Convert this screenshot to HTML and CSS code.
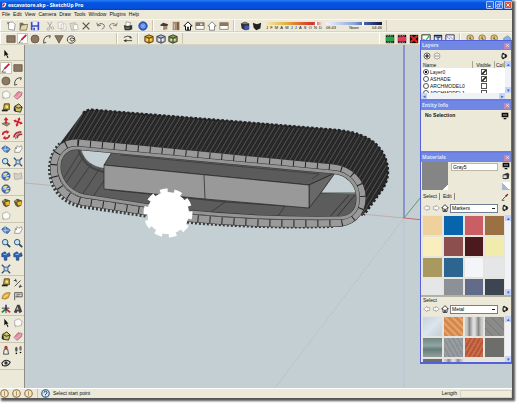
FILE: index.html
```
<!DOCTYPE html>
<html lang="en">
<head>
    <meta charset="UTF-8">
    <meta name="viewport" content="width=device-width, initial-scale=1.0">
    <title>escavatore.skp - SketchUp Pro</title>
    <link rel="stylesheet" href="styles.css">
</head>
<body>
    <svg class="sprite" aria-hidden="true">
        <symbol id="new" viewBox="0 0 12 12"><path d="M3 2l5-1 3 3-1 7-7-1z" fill="#fff" stroke="#777" stroke-width=".8"/><path d="M1 4l3-3M1 1l3 3" stroke="#555" stroke-width=".7"/></symbol>
        <symbol id="open" viewBox="0 0 12 12"><path d="M2 2h4l1 2h3v6H2z" fill="#77705a"/><path d="M4 5l8-1-2 7H2z" fill="#e2d7a5" stroke="#554f3c" stroke-width=".7"/></symbol>
        <symbol id="save" viewBox="0 0 12 12"><path d="M1 1h10v10H1z" fill="#3a4ec8"/><path d="M3 1h6v4H3zM3 7h6v4H3z" fill="#eef"/><path d="M4 8h2v3H4z" fill="#3a4ec8"/></symbol>
        <symbol id="cut" viewBox="0 0 12 12"><path d="M3 1l4 7M8 1L5 8" stroke="#aaa" stroke-width="1.2"/><g fill="none" stroke="#aaa"><circle cx="4" cy="9.500" r="1.500"/><circle cx="9" cy="8.500" r="1.500"/></g></symbol>
        <symbol id="copy" viewBox="0 0 12 12"><path d="M1 2l5-1 2 2v6H2zM5 4l4-1 2 2v6H5z" fill="#f6f5ee" stroke="#bbb" stroke-width=".8"/></symbol>
        <symbol id="paste" viewBox="0 0 12 12"><path d="M1 3l7-1 1 8-6 1z" fill="#ddd9c9" stroke="#aaa" stroke-width=".8"/><path d="M5 5l5-1 1 6-5 1z" fill="#fff" stroke="#aaa" stroke-width=".8"/></symbol>
        <symbol id="del" viewBox="0 0 12 12"><path d="M2 2l8 8M10 2l-8 8" stroke="#555" stroke-width="1.500"/></symbol>
        <symbol id="undo" viewBox="0 0 12 12"><path d="M2 5q4-4 8 0q1 3-3 5M1 2l1 4 4-1" fill="none" stroke="#777" stroke-width="1.200"/></symbol>
        <symbol id="redo" viewBox="0 0 12 12"><path d="M10 5q-4-4-8 0q-1 3 3 5M11 2l-1 4-4-1" fill="none" stroke="#888" stroke-width="1.200"/></symbol>
        <symbol id="print" viewBox="0 0 12 12"><path d="M1 5h10v5l-3 1H2z" fill="#333"/><path d="M4 1l5 1-1 4H3z" fill="#fff" stroke="#555" stroke-width=".6"/><path d="M3 8h5v1H3z" fill="#9b9"/></symbol>
        <symbol id="info" viewBox="0 0 12 12"><circle cx="6" cy="6" r="5" fill="#3461cf" stroke="#1c3d99"/><circle cx="6" cy="6" r="2.500" fill="none" stroke="#a9c4fa"/><circle cx="6" cy="6" r="1" fill="#fff"/></symbol>
        <symbol id="iso" viewBox="0 0 12 12"><path d="M1 5l4-3 6 2-1 2H3z" fill="#443b31"/><path d="M2 6h3v5L2 9z" fill="#eee"/><path d="M5 6h5v4l-5 1z" fill="#a9896a"/></symbol>
        <symbol id="top" viewBox="0 0 12 12"><path d="M2 1h5v10H2z" fill="#aa8a66"/><path d="M7 1h3v10H7z" fill="#7d6248"/><path d="M4 3v7" stroke="#eee" stroke-width=".7"/></symbol>
        <symbol id="home" viewBox="0 0 12 12"><path d="M1 6l5-5 5 5H9v5H3V6z" fill="#fff" stroke="#111" stroke-width="1.200"/><path d="M5 7h2v4H5z" fill="#111"/></symbol>
        <symbol id="right" viewBox="0 0 12 12"><path d="M1 2h10v8H1z" fill="#fff" stroke="#8b775f"/><path d="M1 2h10v4H1z" fill="#8b775f"/><path d="M6 3h3v2H6z" fill="#ddd"/></symbol>
        <symbol id="back" viewBox="0 0 12 12"><path d="M1 6l5-5 5 5H9v5H3V6z" fill="#fff" stroke="#555" stroke-width=".8"/></symbol>
        <symbol id="left" viewBox="0 0 12 12"><path d="M1 2h10v8H1z" fill="#fff" stroke="#8b775f"/><path d="M1 2h10v4H1z" fill="#8b775f"/></symbol>
        <symbol id="shadow" viewBox="0 0 12 12"><path d="M1 3l5-2 5 2v7l-5 1-4-2z" fill="#2e3034"/><path d="M1 3l5 1 5-1-5-2z" fill="#777"/><circle cx="8" cy="8" r="3" fill="#4057b4"/></symbol>
        <symbol id="box" viewBox="0 0 12 12"><path d="M1 2l5 2 5-2-1 7-5 2-3-3z" fill="#222"/></symbol>
        <symbol id="rect" viewBox="0 0 12 12"><path d="M1 2h10v8H1z" fill="#8c7863" stroke="#57493b" stroke-width=".8"/></symbol>
        <symbol id="pencil" viewBox="0 0 12 12"><path d="M10 1L4 7" stroke="#c41a2d" stroke-width="2"/><path d="M4 7l-3 4M1 11h5" stroke="#222" fill="none" stroke-width=".8"/></symbol>
        <symbol id="circle" viewBox="0 0 12 12"><circle cx="6" cy="6" r="4.800" fill="#8c7863" stroke="#57493b" stroke-width=".8"/></symbol>
        <symbol id="arc" viewBox="0 0 12 12"><path d="M2 11Q1 2 10 2M2 11l3-1M10 2l-1 3" fill="none" stroke="#333"/></symbol>
        <symbol id="poly" viewBox="0 0 12 12"><path d="M1 2h10l-5 9z" fill="#8c7863" stroke="#57493b" stroke-width=".8"/></symbol>
        <symbol id="free" viewBox="0 0 12 12"><path d="M2 9C0 3 6 1 9 3s0 7-3 5 1-5 4-2-3 7-7 4" fill="none" stroke="#333" stroke-width="1.100"/></symbol>
        <symbol id="swap" viewBox="0 0 12 12"><path d="M1 4q5-3 9 0M1 8h10" fill="none" stroke="#333"/><path d="M8 2l3 3-3 0zM4 10L1 8l3-2z" fill="#333"/></symbol>
        <symbol id="cube-y" viewBox="0 0 12 12"><path d="M1 3l5-2 5 2v6l-5 2-5-2z" fill="#dca52a" stroke="#403212"/><path d="M1 3l5 2 5-2M6 5v6" stroke="#403212" fill="none"/><path d="M3 6h2v2H3zM7 6h2v2H7z" fill="#ffe783"/></symbol>
        <symbol id="cube-w" viewBox="0 0 12 12"><path d="M1 3l5-2 5 2v6l-5 2-5-2z" fill="#b5bbd0" stroke="#2d3040"/><path d="M1 3l5 2 5-2M6 5v6" stroke="#2d3040" fill="none"/><path d="M3 6h2v2H3zM7 6h2v2H7z" fill="#fff"/></symbol>
        <symbol id="cube-g" viewBox="0 0 12 12"><path d="M1 3l5-2 5 2v6l-5 2-5-2z" fill="#8c9a60" stroke="#2f3422"/><path d="M1 3l5 2 5-2M6 5v6" stroke="#2f3422" fill="none"/><path d="M3 6h2v2H3zM7 6h2v2H7z" fill="#e6ecc8"/></symbol>
        <symbol id="film" viewBox="0 0 12 12"><path d="M1 1h10v10H1z" fill="#111"/><path d="M2 2h8M2 10h8" stroke="#eee" stroke-dasharray="1 1"/><path d="M1 4l2-1h6l2 1v4L9 9H3L1 8z" fill="currentColor"/></symbol>
        <symbol id="film-x" viewBox="0 0 12 12"><path d="M1 1h10v10H1z" fill="#111"/><path d="M2 2l8 8M10 2l-8 8" stroke="#e32424" stroke-width="2.500"/></symbol>
        <symbol id="film-ok" viewBox="0 0 12 12"><path d="M1 1h10v10H1z" fill="#f5fff5" stroke="#111"/><path d="M3 6l2 3 5-7" stroke="#2cae4e" stroke-width="1.500" fill="none"/></symbol>
        <symbol id="film-i" viewBox="0 0 12 12"><path d="M1 1h10v10H1z" fill="#18233e"/><path d="M2 3h8v6H2z" fill="#d8e4f8"/><path d="M4 4h5M6 4v5" stroke="#2c5db8" stroke-width="1.500"/></symbol>
        <symbol id="film-p" viewBox="0 0 12 12"><path d="M1 1h10v10H1z" fill="#eef" stroke="#223"/><path d="M2 3l3 2 1 3 4 2M6 3l4 4" stroke="#445fae" stroke-dasharray="2 1" fill="none"/></symbol>
        <symbol id="coin" viewBox="0 0 12 12"><circle cx="5" cy="5" r="4" fill="#ddc679" stroke="#8b7538"/><path d="M4 5l6 5M5 3v3" stroke="#604f1f" fill="none"/></symbol>
        <symbol id="hat" viewBox="0 0 12 12"><path d="M2 5l5-3 4 4-4 4-5-2z" fill="#86b3df" stroke="#55779c" stroke-width=".6"/></symbol>
        <symbol id="arrow" viewBox="0 0 12 12"><path d="M4 1v8l2-2 2 4 1-1-2-3h2z" fill="#111"/></symbol>
        <symbol id="ghost" viewBox="0 0 12 12"><path d="M2 3l5-2 4 3-1 5-5 1-3-2zM2 8l1 3" fill="#fafaf6" stroke="#999" stroke-width=".8"/></symbol>
        <symbol id="eraser" viewBox="0 0 12 12"><path d="M1 8l5-6 5 1-1 4-5 4z" fill="#e28ca6" stroke="#8f4d62" stroke-width=".7"/><path d="M1 8l4 1 5-6" stroke="#fbd0dc" fill="none" stroke-width=".8"/></symbol>
        <symbol id="tape" viewBox="0 0 12 12"><path d="M4 1h6v7H3z" fill="#c2a53f" stroke="#46391a"/><circle cx="7" cy="4.500" r="1.500" fill="#ffe98a"/><path d="M1 9h7" stroke="#222" stroke-width="2"/></symbol>
        <symbol id="paint" viewBox="0 0 12 12"><path d="M2 4l5-3 4 4-2 6-6-1z" fill="#c9bf6a" stroke="#26251a"/><path d="M2 4q4 4 9 1" stroke="#222" fill="none"/><path d="M1 5q2 0 2 6L1 9z" fill="#222"/></symbol>
        <symbol id="push" viewBox="0 0 12 12"><path d="M1 8l5-2 5 2-4 3z" fill="#9c8974" stroke="#5b4c3e" stroke-width=".6"/><path d="M5 8V4H3l3-4 3 4H7v4z" fill="#cd2030"/></symbol>
        <symbol id="move" viewBox="0 0 12 12"><path d="M6 0l2 3h-1v2h2V4l3 2-3 2V7H7v2h1l-2 3-2-3h1V7H3v1L0 6l3-2v1h2V3H4z" fill="#cf1f31" transform="rotate(20 6 6)"/></symbol>
        <symbol id="rotate" viewBox="0 0 12 12"><path d="M2 6q0-4 5-4M10 6q0 4-5 4" fill="none" stroke="#cb2435" stroke-width="2"/><path d="M6 0l4 2-3 3zM6 12l-4-2 3-3z" fill="#cb2435"/></symbol>
        <symbol id="offset" viewBox="0 0 12 12"><path d="M1 9Q2 2 10 2M5 10q0-5 6-5" fill="none" stroke="#b52435" stroke-width="1.800"/><path d="M3 11q0-7 7-8" stroke="#333" fill="none" stroke-width=".7"/></symbol>
        <symbol id="orbit" viewBox="0 0 12 12"><path d="M1 5l4-3 3 2 3 2-3 4-4-1z" fill="#5684c5" stroke="#234d91"/><path d="M5 1v9M2 7l8-1" stroke="#b9d2ef" fill="none"/></symbol>
        <symbol id="pan" viewBox="0 0 12 12"><path d="M2 10l1-6 1 2 1-4 2 2 3-2 1 3-3 5z" fill="#fff" stroke="#777" stroke-width=".8"/></symbol>
        <symbol id="zoom" viewBox="0 0 12 12"><path d="M7 7l4 4" stroke="#2c3e4f" stroke-width="2"/><circle cx="5" cy="5" r="3.300" fill="#cbe2f1" stroke="#31587c" stroke-width="1.200"/></symbol>
        <symbol id="extents" viewBox="0 0 12 12"><path d="M1 1l3 3M11 1L8 4M1 11l3-3M11 11L8 8" stroke="#2c5588" stroke-width="1.600"/><circle cx="6" cy="6" r="2.500" fill="#b8d4e8" stroke="#33516f"/></symbol>
        <symbol id="globe" viewBox="0 0 12 12"><circle cx="6" cy="6" r="5" fill="#3c6fc4" stroke="#24427c" stroke-width=".7"/><path d="M2 4q3-3 6-1l-3 3zM5 10q1-4 5-2-2 3-5 2z" fill="#f1e07d"/><path d="M2 6q4 1 8-1" stroke="#fff" fill="none"/></symbol>
        <symbol id="terrain" viewBox="0 0 12 12"><path d="M1 3q3-1 5 1l4-2 1 7-5 1-4 0z" fill="#d4d0c5" stroke="#999" stroke-width=".7"/></symbol>
        <symbol id="model" viewBox="0 0 12 12"><path d="M1 4l4-3 6 2-1 6-4 2-3-2z" fill="#665431"/><path d="M5 5l5-1v4L6 9z" fill="#e9b736"/><path d="M2 3l3 1" stroke="#88a850" stroke-width="2"/></symbol>
        <symbol id="walkzoom" viewBox="0 0 12 12"><path d="M1 3l4-2 2 3 3-2 1 4-4 1v4H4V7L1 7z" fill="#2c64bd" stroke="#173769" stroke-width=".8"/><path d="M3 4h4" stroke="#acd1ff"/></symbol>
        <symbol id="dim" viewBox="0 0 12 12"><path d="M1 3h3M2 10l7-7M7 10h4M3 1l1 4M9 8l-1 4" stroke="#333" fill="none"/></symbol>
        <symbol id="protractor" viewBox="0 0 12 12"><path d="M1 9Q2 1 11 2L9 8q-4 3-8 1z" fill="#e0b044" stroke="#8b6a1f" stroke-width=".7"/><path d="M4 8q1-3 4-3" stroke="#fff2b6" fill="none"/></symbol>
        <symbol id="text" viewBox="0 0 12 12"><path d="M2 11V2h9v5H3" fill="#d9d9d2" stroke="#444"/><path d="M4 4h5M4 6h3" stroke="#333" stroke-width=".7"/></symbol>
        <symbol id="axes" viewBox="0 0 12 12"><path d="M6 6V1" stroke="#2638bd" stroke-width="2"/><path d="M6 6l5 4" stroke="#c32a35" stroke-width="2"/><path d="M6 6l-5 4" stroke="#238038" stroke-width="2"/><path d="M6 6v5M1 5l9 0" stroke="#222"/></symbol>
        <symbol id="text3d" viewBox="0 0 12 12"><path d="M1 10l4-9h3l3 8-3 2-2-3-2 3z" fill="#444"/><path d="M5 3l2 4H4z" fill="#bbb"/></symbol>
        <symbol id="camera" viewBox="0 0 12 12"><circle cx="6" cy="3" r="2" fill="#b93838"/><path d="M4 5h4l1 6H3z" fill="#eee" stroke="#333"/></symbol>
        <symbol id="feet" viewBox="0 0 12 12"><ellipse cx="4" cy="5" rx="1.500" ry="3" fill="#555"/><ellipse cx="9" cy="4" rx="1.500" ry="3" fill="#777"/><circle cx="4" cy="10" r="1"/><circle cx="9" cy="9" r="1"/></symbol>
        <symbol id="eye" viewBox="0 0 12 12"><path d="M1 6q5-6 10-1-3 6-9 4z" fill="#eee" stroke="#222" stroke-width="1.300"/><circle cx="6" cy="6" r="2" fill="#333"/></symbol>
        <symbol id="plus" viewBox="0 0 12 12"><circle cx="6" cy="6" r="4.500" fill="#fff" stroke="#222"/><path d="M3 6h6M6 3v6" stroke="#111" stroke-width="1.600"/></symbol>
        <symbol id="minus" viewBox="0 0 12 12"><circle cx="6" cy="6" r="4.500" fill="#f8f6ec" stroke="#888"/><path d="M3 6h6" stroke="#888" stroke-width="1.400"/></symbol>
        <symbol id="menu" viewBox="0 0 12 12"><path d="M6 1l1 2h2l2 3-2 3H7l-1 2-3-1-1-3 1-5z" fill="#222"/><path d="M4 4h3v4H4z" fill="#eee"/></symbol>
        <symbol id="screen" viewBox="0 0 12 12"><path d="M1 1h10v7H1zM4 9h4v2H4z" fill="#111"/><path d="M3 4h6v1H3z" fill="#fff"/></symbol>
        <symbol id="create" viewBox="0 0 12 12"><path d="M1 4l7-3 3 2-1 7-5 1-4-1z" fill="#333"/><path d="M2 5h5v4H2z" fill="#ddd"/></symbol>
        <symbol id="dropper" viewBox="0 0 12 12"><path d="M2 10l5-5" stroke="#555" stroke-width="1.500"/><path d="M6 4l4-3 1 1-3 4z" fill="#811"/><path d="M1 11h4" stroke="#111"/></symbol>
        <symbol id="prev" viewBox="0 0 12 12"><path d="M1 6l5-4v2h4v4H6v2z" fill="#fff" stroke="#888" stroke-width=".9"/></symbol>
        <symbol id="next" viewBox="0 0 12 12"><path d="M11 6L6 2v2H2v4h4v2z" fill="#fff" stroke="#888" stroke-width=".9"/></symbol>
        <symbol id="help" viewBox="0 0 12 12"><circle cx="6" cy="6" r="5" fill="#dce9f5" stroke="#285b88" stroke-width="1.500"/><path d="M4 5q0-2 2-2t2 2q0 1-2 2v1M6 9v1" fill="none" stroke="#183d66" stroke-width="1.300"/></symbol>
        <symbol id="credit" viewBox="0 0 12 12"><circle cx="6" cy="6" r="5" fill="#f1e6c8" stroke="#8b6f3d" stroke-width="1.400"/><path d="M6 3v6" stroke="#a98d57" stroke-width="1.200"/></symbol>
        <symbol id="close" viewBox="0 0 12 12"><path d="M3 3l6 6M9 3l-6 6" stroke="#fff" stroke-width="1.800"/></symbol>
        <symbol id="min" viewBox="0 0 12 12"><path d="M3 9h4" stroke="#fff" stroke-width="2"/></symbol>
        <symbol id="max" viewBox="0 0 12 12"><path d="M5 2h5v5M2 5h5v5H2z" fill="none" stroke="#fff" stroke-width="1.200"/></symbol>
        <symbol id="logo" viewBox="0 0 12 12"><path d="M2 4l5-3 4 2-3 7-5 1z" fill="#fff"/><path d="M2 6l5-4 1 3-4 5z" fill="#d32b35"/></symbol>
    </svg>

    <div class="window">
        <header class="titlebar">
            <svg class="icon"><use href="#logo"/></svg>
            <h1>escavatore.skp - SketchUp Pro</h1>
            <button class="win-btn" aria-label="Minimize"><svg><use href="#min"/></svg></button>
            <button class="win-btn" aria-label="Restore"><svg><use href="#max"/></svg></button>
            <button class="win-btn win-close" aria-label="Close"><svg><use href="#close"/></svg></button>
        </header>

        <nav class="menubar">
            <button>File</button>
            <button>Edit</button>
            <button>View</button>
            <button>Camera</button>
            <button>Draw</button>
            <button>Tools</button>
            <button>Window</button>
            <button>Plugins</button>
            <button>Help</button>
        </nav>

        <div class="toolbar">
            <div class="tools">
                <button aria-label="New"><svg><use href="#new"/></svg></button>
                <button aria-label="Open"><svg><use href="#open"/></svg></button>
                <button aria-label="Save"><svg><use href="#save"/></svg></button>
                <i></i>
                <button aria-label="Cut"><svg><use href="#cut"/></svg></button>
                <button aria-label="Copy"><svg><use href="#copy"/></svg></button>
                <button aria-label="Paste"><svg><use href="#paste"/></svg></button>
                <button aria-label="Erase"><svg><use href="#del"/></svg></button>
                <i></i>
                <button aria-label="Undo"><svg><use href="#undo"/></svg></button>
                <button aria-label="Redo"><svg><use href="#redo"/></svg></button>
                <i></i>
                <button aria-label="Print"><svg><use href="#print"/></svg></button>
                <i></i>
                <button aria-label="Model Info"><svg><use href="#info"/></svg></button>
            </div>
            <div class="tools">
                <button aria-label="Iso"><svg><use href="#iso"/></svg></button>
                <button aria-label="Top"><svg><use href="#top"/></svg></button>
                <button aria-label="Front"><svg><use href="#home"/></svg></button>
                <button aria-label="Right"><svg><use href="#right"/></svg></button>
                <button aria-label="Back"><svg><use href="#back"/></svg></button>
                <button aria-label="Left"><svg><use href="#left"/></svg></button>
            </div>
            <div class="tools">
                <button aria-label="Shadow Settings"><svg><use href="#shadow"/></svg></button>
                <button aria-label="Shadows"><svg><use href="#box"/></svg></button>
                <div class="slider">
                    <input type="range" class="date" min="1" max="12" value="11" aria-label="Date">
                    <div class="ticks"><span>J</span><span>F</span><span>M</span><span>A</span><span>M</span><span>J</span><span>J</span><span>A</span><span>S</span><span>O</span><span>N</span><span>D</span></div>
                </div>
                <div class="slider">
                    <input type="range" class="time" min="0" max="100" value="67" aria-label="Time">
                    <div class="ticks"><span>06:43</span><span>Noon</span><span>04:46</span></div>
                </div>
            </div>
        </div>

        <div class="toolbar">
            <div class="tools draw">
                <button aria-label="Rectangle"><svg><use href="#rect"/></svg></button>
                <button class="active" aria-label="Line"><svg><use href="#pencil"/></svg></button>
                <button aria-label="Circle"><svg><use href="#circle"/></svg></button>
                <button aria-label="Arc"><svg><use href="#arc"/></svg></button>
                <button aria-label="Polygon"><svg><use href="#poly"/></svg></button>
                <button aria-label="Freehand"><svg><use href="#free"/></svg></button>
            </div>
            <div class="tools">
                <button aria-label="Swap"><svg><use href="#swap"/></svg></button>
            </div>
            <div class="tools">
                <button aria-label="Make Unique"><svg><use href="#cube-y"/></svg></button>
                <button aria-label="Make Component"><svg><use href="#cube-w"/></svg></button>
                <button aria-label="Replace"><svg><use href="#cube-g"/></svg></button>
            </div>
            <div class="tools films">
                <button class="green" aria-label="Add Keyframe"><svg><use href="#film"/></svg></button>
                <button class="red" aria-label="Update Keyframe"><svg><use href="#film"/></svg></button>
                <button aria-label="Remove Keyframe"><svg><use href="#film-x"/></svg></button>
                <button aria-label="Check"><svg><use href="#film-ok"/></svg></button>
                <button aria-label="Tween"><svg><use href="#film-i"/></svg></button>
                <button aria-label="Path"><svg><use href="#film-p"/></svg></button>
            </div>
            <div class="tools coins">
                <button aria-label="Record"><svg><use href="#coin"/></svg></button>
                <button aria-label="Play"><svg><use href="#coin"/></svg></button>
                <button aria-label="Rewind"><svg><use href="#coin"/></svg></button>
                <button aria-label="Export"><svg><use href="#hat"/></svg></button>
            </div>
        </div>

        <main class="workspace">
            <aside class="toolbox">
                <div class="set">
                    <button aria-label="Select"><svg><use href="#arrow"/></svg></button>
                </div>
                <div class="set">
                    <button class="active" aria-label="Line"><svg><use href="#pencil"/></svg></button>
                    <button aria-label="Rectangle"><svg><use href="#rect"/></svg></button>
                    <button aria-label="Circle"><svg><use href="#circle"/></svg></button>
                    <button aria-label="Arc"><svg><use href="#arc"/></svg></button>
                </div>
                <div class="set">
                    <button aria-label="Make Component"><svg><use href="#ghost"/></svg></button>
                    <button aria-label="Eraser"><svg><use href="#eraser"/></svg></button>
                    <button aria-label="Tape Measure"><svg><use href="#tape"/></svg></button>
                    <button aria-label="Paint Bucket"><svg><use href="#paint"/></svg></button>
                </div>
                <div class="set">
                    <button aria-label="Push/Pull"><svg><use href="#push"/></svg></button>
                    <button aria-label="Move"><svg><use href="#move"/></svg></button>
                    <button aria-label="Rotate"><svg><use href="#rotate"/></svg></button>
                    <button aria-label="Offset"><svg><use href="#offset"/></svg></button>
                </div>
                <div class="set">
                    <button aria-label="Orbit"><svg><use href="#orbit"/></svg></button>
                    <button aria-label="Pan"><svg><use href="#pan"/></svg></button>
                    <button aria-label="Zoom"><svg><use href="#zoom"/></svg></button>
                    <button aria-label="Zoom Extents"><svg><use href="#extents"/></svg></button>
                </div>
                <div class="set">
                    <button aria-label="Get Current View"><svg><use href="#globe"/></svg></button>
                    <button aria-label="Toggle Terrain"><svg><use href="#terrain"/></svg></button>
                    <button aria-label="Place Model"><svg><use href="#globe"/></svg></button>
                </div>
                <div class="set">
                    <button aria-label="Get Models"><svg><use href="#model"/></svg></button>
                    <button aria-label="Share Models"><svg><use href="#model"/></svg></button>
                    <button aria-label="Share Component"><svg><use href="#ghost"/></svg></button>
                </div>
                <div class="set">
                    <button aria-label="Orbit"><svg><use href="#orbit"/></svg></button>
                    <button aria-label="Pan"><svg><use href="#pan"/></svg></button>
                    <button aria-label="Zoom"><svg><use href="#zoom"/></svg></button>
                    <button aria-label="Zoom Window"><svg><use href="#zoom"/></svg></button>
                    <button aria-label="Previous"><svg><use href="#walkzoom"/></svg></button>
                    <button aria-label="Next"><svg><use href="#walkzoom"/></svg></button>
                    <button aria-label="Zoom Extents"><svg><use href="#extents"/></svg></button>
                </div>
                <div class="set">
                    <button aria-label="Tape Measure"><svg><use href="#tape"/></svg></button>
                    <button aria-label="Dimension"><svg><use href="#dim"/></svg></button>
                    <button aria-label="Protractor"><svg><use href="#protractor"/></svg></button>
                    <button aria-label="Text"><svg><use href="#text"/></svg></button>
                    <button aria-label="Axes"><svg><use href="#axes"/></svg></button>
                    <button aria-label="3D Text"><svg><use href="#text3d"/></svg></button>
                </div>
                <div class="set">
                    <button aria-label="Select"><svg><use href="#arrow"/></svg></button>
                    <button aria-label="Component"><svg><use href="#ghost"/></svg></button>
                    <button aria-label="Paint Bucket"><svg><use href="#paint"/></svg></button>
                    <button aria-label="Eraser"><svg><use href="#eraser"/></svg></button>
                </div>
                <div class="set">
                    <button aria-label="Position Camera"><svg><use href="#camera"/></svg></button>
                    <button aria-label="Walk"><svg><use href="#feet"/></svg></button>
                    <button aria-label="Look Around"><svg><use href="#eye"/></svg></button>
                </div>
            </aside>

            <svg class="scene" viewBox="25 45 487 343" preserveAspectRatio="xMinYMin slice" role="img" aria-label="Excavator track model">
                <defs>
                    <pattern id="tread" width="5" height="8" patternUnits="userSpaceOnUse" patternTransform="skewX(-31)">
                        <rect width="5" height="8" fill="#1c1c1c"/>
                        <path d="M1 0v8" stroke="#6c6c6c"/>
                        <path d="M3.500 0v8" stroke="#3a3a3a" stroke-width=".7"/>
                    </pattern>
                    <clipPath id="hole">
                        <path d="M78 148L333 172C348 173 358 184 358 198C358 212 350 219 336 218Q260 219 190 212L84 196C67 192 59 178 59 167C59 155 67 147 78 148z"/>
                    </clipPath>
                </defs>

                <!-- axes -->
                <path d="M25 183L404 218" stroke="#c4a3a6" stroke-width=".8"/>
                <path d="M404 218L275 388" stroke="#a1b5ac" stroke-width=".7" stroke-dasharray="1 1"/>
                <path d="M404 218v170" stroke="#a9afd0" stroke-width=".7" stroke-dasharray="1 1"/>
                <path d="M404 45v173" stroke="#5157c4"/>
                <path d="M404 218l108 11" stroke="#c46a72"/>
                <path d="M404 218l50-62" stroke="#5b9d70"/>

                <!-- treads -->
                <path d="M60 144L83 113Q87 109 95 110L230 121L338 130Q364 133 376 144Q388 156 388 172Q388 181 382 190L362 216L350 190L320 168L78 145z" fill="url(#tread)" stroke="#222" stroke-width=".6"/>
                <path d="M83 113Q87 109 95 110L230 121L338 130Q364 133 376 144Q388 156 388 172Q388 181 382 190L364 215" fill="none" stroke="#222" stroke-width="2.400" stroke-dasharray="2.500 2"/>

                <!-- inside of the loop -->
                <g clip-path="url(#hole)">
                    <path d="M50 140h320v90H50z" fill="#5c5c5c"/>
                    <path d="M62 189L84 156M70 194L92 163M80 198L100 168M88 204L110 172M64 178L80 152" stroke="#303030" stroke-width=".7"/>
                    <path d="M78 148Q83 168 104 172" fill="none" stroke="#444" stroke-width="2"/>
                    <path d="M81 149L112 152L104 168Q86 166 81 149z" fill="#c4cfd3"/>
                    <path d="M335 173L365 176V194L321 193z" fill="#c4cfd3"/>
                    <path d="M321 193H358M355 195L334 220M349 195L327 220" stroke="#222" stroke-width=".7"/>
                    <path d="M110 190L225 202L285 206L278 216M225 202L211 212L262 216" fill="none" stroke="#303030" stroke-width=".7"/>
                    <path d="M112 152L335 173L309 185L104 165z" fill="#5b5b5b" stroke="#222" stroke-width=".7"/>
                    <path d="M120 155L319 174L312 179" fill="none" stroke="#333" stroke-width=".6"/>
                    <path d="M309 185L335 173L320 194L309 208z" fill="#686868" stroke="#222" stroke-width=".7"/>
                    <path d="M104 165L309 185V208L205 199L104 189z" fill="#999" stroke="#222" stroke-width=".7"/>
                    <path d="M204 175l1 24" stroke="#222" stroke-width=".7"/>
                </g>

                <!-- front chain -->
                <path class="chain teeth" d="M333 226Q260 228 190 222L80 206C58 201 50 184 50 170Q50 154 60 144"/>
                <path class="chain edge" d="M78 143L333 168C350 170 362 182 362 198C362 214 350 224 333 223Q260 225 190 218L80 201C62 196 54 182 54 168C54 152 64 142 78 143z"/>
                <path class="chain links" d="M78 143L333 168C350 170 362 182 362 198C362 214 350 224 333 223Q260 225 190 218L80 201C62 196 54 182 54 168C54 152 64 142 78 143z"/>
                <path class="chain joints" d="M78 143L333 168C350 170 362 182 362 198C362 214 350 224 333 223Q260 225 190 218L80 201C62 196 54 182 54 168C54 152 64 142 78 143z"/>
                <path class="chain rail-edge" d="M78 148L333 172C348 173 358 184 358 198C358 212 350 219 336 218Q260 219 190 212L84 196C67 192 59 178 59 167C59 155 67 147 78 148z"/>
                <path class="chain rail" d="M78 148L333 172C348 173 358 184 358 198C358 212 350 219 336 218Q260 219 190 212L84 196C67 192 59 178 59 167C59 155 67 147 78 148z"/>

                <!-- sprocket -->
                <circle cx="168" cy="213" r="21" fill="#fff"/>
                <circle cx="168" cy="213" r="22" fill="none" stroke="#fff" stroke-width="5" stroke-dasharray="7.500 6.323" transform="rotate(-4 168 213)"/>
            </svg>

            <div class="tray">
                <section class="panel">
                    <header><h2>Layers</h2><button aria-label="Close Layers"><svg><use href="#close"/></svg></button></header>
                    <div class="row layer-tools">
                        <button aria-label="Add Layer"><svg><use href="#plus"/></svg></button>
                        <button aria-label="Delete Layer"><svg><use href="#minus"/></svg></button>
                        <span class="grow"></span>
                        <button aria-label="Details"><svg><use href="#menu"/></svg></button>
                    </div>
                    <div class="scroll-area layers">
                        <div class="view">
                            <table>
                                <thead>
                                    <tr><th class="name">Name</th><th>Visible</th><th>Col</th></tr>
                                </thead>
                                <tbody>
                                    <tr><td><label><input type="radio" name="layer" checked>Layer0</label></td><td><input type="checkbox" aria-label="Layer0 visible" checked></td><td></td></tr>
                                    <tr><td><label><input type="radio" name="layer">ASHADE</label></td><td><input type="checkbox" aria-label="ASHADE visible" checked></td><td></td></tr>
                                    <tr><td><label><input type="radio" name="layer">ARCHMODEL0</label></td><td><input type="checkbox" aria-label="ARCHMODEL0 visible"></td><td></td></tr>
                                    <tr><td><label><input type="radio" name="layer">ARCHMODEL1</label></td><td><input type="checkbox" aria-label="ARCHMODEL1 visible"></td><td></td></tr>
                                </tbody>
                            </table>
                        </div>
                        <div class="bar"><button aria-label="Up">&#9652;</button><button aria-label="Down">&#9662;</button></div>
                    </div>
                    <div class="hbar"><button aria-label="Left">&#9666;</button><button aria-label="Right">&#9656;</button></div>
                </section>

                <section class="panel">
                    <header><h2>Entity Info</h2><button aria-label="Close Entity Info"><svg><use href="#close"/></svg></button></header>
                    <div class="row entity">
                        <strong>No Selection</strong>
                        <button aria-label="Details"><svg><use href="#screen"/></svg></button>
                    </div>
                </section>

                <section class="panel">
                    <header><h2>Materials</h2><button aria-label="Close Materials"><svg><use href="#close"/></svg></button></header>
                    <div class="current">
                        <div class="preview"></div>
                        <input type="text" value="Gray5" aria-label="Material name">
                        <div class="side">
                            <button aria-label="Secondary pane"><svg><use href="#screen"/></svg></button>
                            <button aria-label="Create Material"><svg><use href="#create"/></svg></button>
                            <span class="default"></span>
                        </div>
                    </div>
                    <div class="row tabs">
                        <button>Select</button>
                        <button>Edit</button>
                        <span class="grow"></span>
                        <button aria-label="Sample Paint"><svg><use href="#dropper"/></svg></button>
                    </div>
                    <div class="row">
                        <button aria-label="Back"><svg><use href="#prev"/></svg></button>
                        <button aria-label="Forward"><svg><use href="#next"/></svg></button>
                        <button aria-label="In Model"><svg><use href="#home"/></svg></button>
                        <select aria-label="Library"><option>Markers</option></select>
                        <button aria-label="Details"><svg><use href="#menu"/></svg></button>
                    </div>
                    <div class="scroll-area markers">
                        <ul class="swatches">
                            <li class="sand"></li><li class="blue"></li><li class="rose"></li><li class="brown"></li>
                            <li class="cream"></li><li class="plum"></li><li class="wine"></li><li class="lemon"></li>
                            <li class="olive"></li><li class="teal"></li><li class="white"></li><li class="pale"></li>
                            <li class="pale"></li><li class="gray"></li><li class="slate"></li><li class="ink"></li>
                        </ul>
                        <div class="bar"><button aria-label="Up">&#9652;</button><button aria-label="Down">&#9662;</button></div>
                    </div>
                    <div class="row second">Select</div>
                    <div class="row">
                        <button aria-label="Back"><svg><use href="#prev"/></svg></button>
                        <button aria-label="Forward"><svg><use href="#next"/></svg></button>
                        <button aria-label="In Model"><svg><use href="#home"/></svg></button>
                        <select aria-label="Second library"><option>Metal</option></select>
                        <button aria-label="Details"><svg><use href="#menu"/></svg></button>
                    </div>
                    <div class="scroll-area metals">
                        <ul class="swatches">
                            <li class="aluminum"></li><li class="copper"></li><li class="corrugated"></li><li class="plate"></li>
                            <li class="brushed"></li><li class="rough"></li><li class="rust"></li><li class="steel"></li>
                            <li class="steel"></li><li class="corrugated"></li>
                        </ul>
                        <div class="bar"><button aria-label="Up">&#9652;</button><button aria-label="Down">&#9662;</button></div>
                    </div>
                </section>
            </div>
        </main>

        <footer class="statusbar">
            <button aria-label="Geo-location"><svg><use href="#credit"/></svg></button>
            <button aria-label="Credits"><svg><use href="#credit"/></svg></button>
            <button aria-label="Claim"><svg><use href="#credit"/></svg></button>
            <button class="help" aria-label="Help"><svg><use href="#help"/></svg></button>
            <span>Select start point</span>
            <label for="length">Length</label>
            <input type="text" id="length">
        </footer>
    </div>
</body>
</html>
```
FILE: styles.css
```
* {
    box-sizing: border-box;
}

body {
    margin: 0;
    padding: 0 5px 5px 0;
    background-color: #fff;
    font: 5px/7px "Liberation Sans", Arial, sans-serif;
    color: #111;
}

.sprite {
    display: none;
}

button {
    display: flex;
    align-items: center;
    justify-content: center;
    padding: 0;
    border: none;
    background: none;
    font: inherit;
    color: inherit;
}

button svg,
.icon {
    display: block;
    width: 10px;
    height: 10px;
}

h1, h2 {
    flex: 1;
    margin: 0;
    font-family: "Open Sans", "Liberation Sans", sans-serif;
    font-size: 5px;
    font-weight: bold;
    color: #fff;
}

.grow {
    flex: 1;
}

.window {
    display: flex;
    flex-direction: column;
    height: calc(100vh - 5px);
    background-color: #ece9d8;
    box-shadow: 2px 2px 2px 1px #555;
}

/* title and menu */
.titlebar {
    display: flex;
    align-items: center;
    gap: 1px;
    height: 10px;
    padding-left: 1px;
    background: linear-gradient(#2a7df5, #0453e0 30%, #0550dc 80%, #0340b5);
}

.titlebar .icon {
    width: 6px;
    height: 6px;
}

.win-btn {
    width: 8px;
    height: 8px;
    border: 1px solid #a9c4fa;
    border-radius: 1px;
    background-color: #2f68e4;
}

.win-btn svg {
    width: 6px;
    height: 6px;
}

.win-close {
    background-color: #dc5332;
}

.menubar {
    display: flex;
    align-items: center;
    gap: 3px;
    height: 9px;
    padding-left: 2px;
}

/* toolbars */
.toolbar {
    display: flex;
    height: 13px;
    border-top: 1px solid #f8f7f0;
    border-bottom: 1px solid #d8d4c2;
}

.tools {
    display: flex;
    align-items: center;
    gap: 1px;
    padding: 0 4px;
    border-left: 1px solid #fff;
    border-right: 1px solid #c9c5b2;
}

.tools > button {
    width: 11px;
    height: 11px;
}

.tools > i {
    width: 2px;
}

.tools .active,
.set .active {
    background-color: #fff;
    outline: 1px solid #c8c4b4;
    outline-offset: -1px;
}

.draw {
    padding-right: 40px;
}

.films {
    margin-left: auto;
}

.coins {
    padding-right: 0;
    border-right: none;
}

.green {
    color: #25a545;
}

.red {
    color: #e53b58;
}

.slider {
    width: 56px;
    margin-left: 3px;
}

.slider input {
    display: block;
    appearance: none;
    width: 100%;
    height: 3px;
    margin: 1px 0 0;
}

.slider input::-webkit-slider-thumb {
    appearance: none;
    width: 2px;
    height: 4px;
    background-color: #fff;
}

.date {
    background: linear-gradient(90deg, #f5e9b0, #e5b23c 35%, #d8442c 75%, #c33 84%, #f3dcd8);
}

.time {
    background: linear-gradient(90deg, #f2f4fb, #8ea5dc 50%, #4c66b8 66%, #10163c);
}

.ticks {
    display: flex;
    justify-content: space-between;
    font-size: 4px;
    line-height: 5px;
}

/* workspace */
.workspace {
    position: relative;
    display: flex;
    flex: 1;
    min-height: 0;
}

.toolbox {
    flex: none;
    width: 25px;
    padding-top: 2px;
    border-right: 1px solid #8b8d86;
}

.set {
    display: grid;
    grid-template-columns: 12px 12px;
    grid-auto-rows: 12px;
    row-gap: 1px;
    padding-top: 1px;
    border-bottom: 1px solid #c9c5b2;
}

.scene {
    flex: 1;
    min-width: 0;
    height: 100%;
    background-color: #c4cfd3;
}

.chain {
    fill: none;
}

.teeth {
    stroke: #3a3a3a;
    stroke-width: 4px;
    stroke-dasharray: 2 2;
}

.edge {
    stroke: #333;
    stroke-width: 8px;
}

.links {
    stroke: #9a9a9a;
    stroke-width: 7px;
}

.joints {
    stroke: #222;
    stroke-width: 7px;
    stroke-dasharray: 1 11;
}

.rail-edge {
    stroke: #333;
    stroke-width: 4px;
}

.rail {
    stroke: #959595;
    stroke-width: 3px;
}

/* floating palettes */
.tray {
    position: absolute;
    top: -5px;
    right: 0;
    width: 92px;
    border: 1px solid #5560dc;
    border-bottom-width: 2px;
    background-color: #ece9d8;
}

.panel + .panel {
    border-top: 2px solid #6a7ce2;
}

.panel > header {
    display: flex;
    align-items: center;
    height: 9px;
    padding: 0 1px 0 1px;
    background-color: #7088e4;
}

.panel h2 {
    color: #dfe6ff;
}

.panel > header button {
    width: 6px;
    height: 6px;
    background-color: #c386b4;
}

.panel > header svg {
    width: 5px;
    height: 5px;
}

.row {
    display: flex;
    align-items: center;
    gap: 1px;
    height: 10px;
    padding: 0 2px;
}

.row button svg,
.side button svg {
    width: 8px;
    height: 8px;
}

.layer-tools {
    height: 11px;
}

.layer-tools button {
    margin-right: 1px;
}

.scroll-area {
    display: flex;
    overflow: hidden;
    margin-left: 1px;
    background-color: #fff;
}

.layers {
    height: 32px;
}

.view {
    flex: 1;
    min-width: 0;
    overflow: hidden;
}

.bar,
.hbar {
    display: flex;
    justify-content: space-between;
    background-color: #f1f2f8;
    color: #405db5;
}

.bar {
    flex: none;
    flex-direction: column;
    width: 6px;
}

.bar button,
.hbar button {
    width: 6px;
    height: 6px;
    background-color: #c5d3fa;
    line-height: 6px;
}

.hbar {
    margin-right: 6px;
}

table {
    width: 100%;
    table-layout: fixed;
    border-collapse: collapse;
}

th,
td {
    height: 7px;
    padding: 0 1px;
    text-align: center;
    line-height: 6px;
    white-space: nowrap;
}

th {
    width: 10px;
    border-right: 1px solid #aaa692;
    background-color: #ece9d8;
    font-weight: normal;
}

th:nth-child(2) {
    width: 22px;
}

th.name {
    width: auto;
}

th.name,
td:first-child {
    text-align: left;
}

td label {
    display: flex;
    align-items: center;
    gap: 1px;
}

td input {
    appearance: none;
    display: block;
    width: 6px;
    height: 6px;
    margin: 0 auto;
    border: 1px solid #555;
    background-color: #fff;
}

td label input {
    flex: none;
    margin: 0;
    border-radius: 50%;
}

td input[type="radio"]:checked {
    background: radial-gradient(#111 40%, #fff 50%);
}

td input[type="checkbox"]:checked {
    background: linear-gradient(135deg, #fff 30%, #222 45%, #222 60%, #fff 70%);
}

.entity {
    align-items: flex-start;
    justify-content: space-between;
    height: 41px;
    padding-top: 2px;
    padding-left: 4px;
}

.current {
    display: flex;
    align-items: flex-start;
    gap: 3px;
    padding: 0 1px;
}

.preview {
    width: 26px;
    height: 28px;
    background: linear-gradient(135deg, #858585 90%, #fff 90%);
}

.current input {
    flex: 1;
    min-width: 0;
    height: 8px;
    margin-top: 1px;
    padding: 0 1px;
    border: 1px solid #b9b6a6;
    background-color: #fff;
    font: inherit;
}

.side {
    display: flex;
    flex-direction: column;
    align-items: center;
    gap: 2px;
    width: 9px;
}

.default {
    width: 8px;
    height: 8px;
    background: linear-gradient(45deg, #a9b6d4 50%, #fff 50%);
}

.tabs {
    height: 13px;
    gap: 3px;
}

.tabs button:nth-child(-n+2) {
    padding-right: 2px;
    border-right: 1px solid #8d8a7b;
}

.row select {
    appearance: none;
    flex: 1;
    min-width: 0;
    height: 9px;
    margin: 0 2px 0 0;
    padding: 0 1px;
    border: 1px solid #6f7f94;
    border-radius: 0;
    background: linear-gradient(#222, #222) right 2px center / 3px 1px no-repeat #fff;
    font: inherit;
}

.swatches {
    display: grid;
    flex: 1;
    grid-template-columns: repeat(4, 1fr);
    grid-auto-rows: 19px;
    gap: 2px;
    margin: 0;
    padding: 1px;
    background-color: #e6e4dc;
    list-style: none;
}

.markers {
    height: 80px;
    margin-top: 2px;
}

.metals {
    height: 46px;
    margin-top: 2px;
}

.second {
    height: 9px;
    border-top: 2px solid #b5b2a2;
}

.sand { background-color: #efd19b; }
.blue { background-color: #0864ad; }
.rose { background-color: #cb5d65; }
.brown { background-color: #9b7042; }
.cream { background-color: #fbeebd; }
.plum { background-color: #8d4e4e; }
.wine { background-color: #4c191f; }
.lemon { background-color: #f2ecac; }
.olive { background-color: #a7995f; }
.teal { background-color: #2c6590; }
.white { background-color: #f4f5f8; }
.pale { background-color: #e5e6e8; }
.gray { background-color: #8c9197; }
.slate { background-color: #626b88; }
.ink { background-color: #3d4452; }
.aluminum { background: linear-gradient(135deg, #c8d3de, #dce4ec 50%, #c3cfdb); }
.copper { background: repeating-linear-gradient(45deg, #d5874c 0 3px, #e4a26c 3px 5px); }
.corrugated { background: linear-gradient(90deg, #c9c9c9 10%, #888 25%, #ddd 45%, #ddd 55%, #888 75%, #c9c9c9 90%); }
.plate { background: repeating-linear-gradient(45deg, #8b8b8b 0 5px, #777 5px 6px); }
.brushed { background: linear-gradient(#6f8584, #91a5a3 40%, #677d7b 60%, #8ea09d); }
.rough { background: repeating-linear-gradient(60deg, #8b9194 0 2px, #979da0 2px 4px); }
.rust { background: repeating-linear-gradient(120deg, #b95636 0 2px, #c76d4e 2px 4px); }
.steel { background-color: #6d6e6c; }

/* status bar */
.statusbar {
    display: flex;
    align-items: center;
    gap: 3px;
    height: 10px;
    border-top: 1px solid #fff;
}

.statusbar button svg {
    width: 9px;
    height: 9px;
}

.statusbar .help {
    margin-left: 1px;
    padding-left: 3px;
    border-left: 1px solid #c9c5b2;
}

.statusbar label {
    margin-left: auto;
}

.statusbar input {
    width: 52px;
    height: 8px;
    border: 1px solid #d5d1bf;
    background-color: #efecdc;
    font: inherit;
}
```
